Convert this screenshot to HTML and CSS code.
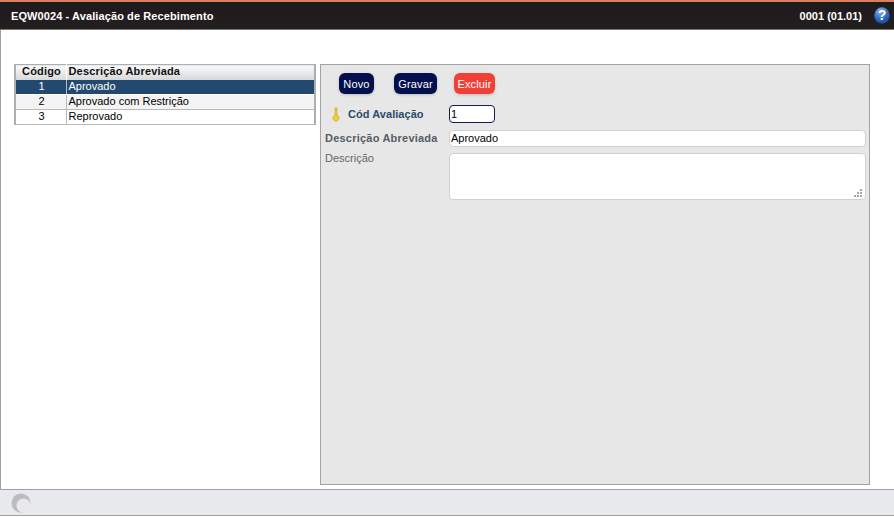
FILE: index.html
```html
<!DOCTYPE html>
<html lang="pt">
<head>
<meta charset="utf-8">
<title>EQW0024 - Avaliação de Recebimento</title>
<link rel="stylesheet" href="styles.css">
</head>
<body>
<div class="app">
  <header class="topbar">
    <span class="title">EQW0024 - Avaliação de Recebimento</span>
    <span class="version">0001 (01.01)</span>
    <svg class="help" width="16" height="17" viewBox="0 0 16 17">
      <defs>
        <radialGradient id="hg" cx="0.4" cy="0.25" r="0.85">
          <stop offset="0" stop-color="#8db8ea"/>
          <stop offset="0.55" stop-color="#2f6cc0"/>
          <stop offset="1" stop-color="#123f86"/>
        </radialGradient>
      </defs>
      <ellipse cx="8" cy="8.5" rx="7.8" ry="8.2" fill="url(#hg)"/>
      <text x="8" y="13.4" text-anchor="middle" class="help-q">?</text>
    </svg>
  </header>
  <main class="content">
    <table class="grid">
      <thead>
        <tr><th class="c1">Código</th><th class="c2">Descrição Abreviada</th></tr>
      </thead>
      <tbody>
        <tr class="sel"><td class="c1">1</td><td class="c2">Aprovado</td></tr>
        <tr class="alt"><td class="c1">2</td><td class="c2">Aprovado com Restrição</td></tr>
        <tr><td class="c1">3</td><td class="c2">Reprovado</td></tr>
      </tbody>
    </table>
    <section class="panel">
      <div class="actions">
        <button class="btn btn-novo">Novo</button>
        <button class="btn btn-gravar">Gravar</button>
        <button class="btn btn-excluir">Excluir</button>
      </div>
      <div class="form">
        <label class="lbl key-lbl">
          <svg class="key" width="10" height="15" viewBox="0 0 10 15">
            <path d="M4 1h2v7.2a3 3 0 1 1-2 0z" fill="#f0cf35" stroke="#c09a1c" stroke-width="0.6"/>
          </svg>
          <span>Cód Avaliação</span>
        </label>
        <input class="inp inp-code" value="1">
        <label class="lbl lbl-gray">Descrição Abreviada</label>
        <input class="inp inp-wide" value="Aprovado">
        <label class="lbl lbl-plain">Descrição</label>
        <div class="area-wrap">
          <textarea class="area"></textarea>
          <svg class="grip" width="9" height="9" viewBox="0 0 9 9">
            <path d="M6 0h2v2H6zM3 3h2v2H3zM6 3h2v2H6zM0 6h2v2H0zM3 6h2v2H3zM6 6h2v2H6z" fill="#a8a8a8"/>
          </svg>
        </div>
      </div>
    </section>
  </main>
  <footer class="status">
    <svg width="20" height="20" viewBox="0 0 20 20">
      <circle cx="10" cy="10" r="9.5" fill="#bcbcc0"/>
      <circle cx="12.5" cy="12.5" r="7" fill="#e8e9ed"/>
    </svg>
  </footer>
</div>
</body>
</html>
```
FILE: styles.css
```css
html, body {
  margin: 0;
  padding: 0;
  background: #fff;
}
body {
  font-family: "Liberation Sans", Arial, sans-serif;
  font-size: 11px;
  color: #000;
}
.app {
  width: 894px;
  height: 517px;
  display: flex;
  flex-direction: column;
  overflow: hidden;
}
.topbar {
  flex: none;
  box-sizing: content-box;
  height: 27px;
  border-top: 2px solid #d9805f;
  border-bottom: 1px solid #77736f;
  background: linear-gradient(#1f1b1c, #231f20);
  color: #fff;
  display: flex;
  align-items: center;
  padding: 0 4px 0 11px;
  font-weight: bold;
  font-size: 11px;
}
.title { flex: 1; letter-spacing: 0.1px; }
.version { margin-right: 12px; }
.help { display: block; }
.help-q {
  font: bold 14px "Liberation Sans", Arial, sans-serif;
  fill: #fff;
}
.content {
  flex: 1;
  display: flex;
  align-items: flex-start;
  border-left: 1px solid #a0a0a0;
  padding: 34px 0 4px 13px;
  min-height: 0;
}
.grid {
  width: 302px;
  border-collapse: collapse;
  table-layout: fixed;
  border: 2px solid #a9b0b5;
  border-top-width: 1px;
  border-bottom-width: 1px;
  margin-right: 4px;
  box-sizing: border-box;
}
.grid th, .grid td {
  padding: 0 0 1px 1px;
  height: 13px;
  line-height: 13px;
  font-size: 11px;
  border-right: 1px solid #b4babd;
  border-bottom: 1px solid #b4babd;
  overflow: hidden;
  white-space: nowrap;
}
.grid th {
  height: 13px;
  padding-bottom: 2px;
  background: linear-gradient(#fbfbfb, #d5d6d8);
  text-align: left;
  color: #111;
  border: 0;
  border-right: 1px solid #fff;
  letter-spacing: 0.17px;
}
.grid .c1 { width: 49px; text-align: center; }
.grid .c2 { border-right: 0; padding-left: 1.5px; }
.sel td { background: #234a6e; color: #fff; border-bottom-color: #fff; }
.alt td { background: #f4f4f4; }
.panel {
  width: 550px;
  height: 421px;
  box-sizing: border-box;
  background: #e7e7e7;
  border: 1px solid #a3a3a3;
  padding: 8px 3px 0 4px;
  flex: none;
}
.actions {
  display: flex;
  padding-left: 14px;
  gap: 20px;
  height: 21px;
}
.btn {
  border: 0;
  border-radius: 6px;
  color: #fff;
  font: 11px "Liberation Sans", Arial, sans-serif;
  letter-spacing: 0.15px;
  padding: 0;
  height: 21px;
  box-shadow: 0 1px 3px #bdbdbd;
}
.btn-novo { width: 35px; background: #03104d; }
.btn-gravar { width: 43px; background: #03104d; }
.btn-excluir { width: 41px; background: #f04038; margin-left: -3px; }
.form {
  display: grid;
  grid-template-columns: 124px 1fr;
  grid-template-rows: 19px 17px 47px;
  row-gap: 6px;
  margin-top: 11px;
}
.lbl {
  font-size: 11px;
  font-weight: bold;
  letter-spacing: 0.22px;
  color: #555d66;
  line-height: 18px;
}
.key-lbl {
  display: flex;
  align-items: center;
  height: 18px;
  padding-left: 6px;
  color: #2c4a6b;
  letter-spacing: 0.05px;
}
.key { margin-right: 7px; }
.lbl-gray { line-height: 17px; }
.lbl-plain { font-weight: normal; color: #666; line-height: 10px; letter-spacing: 0; }
.inp {
  box-sizing: border-box;
  font: 11px "Liberation Sans", Arial, sans-serif;
  padding: 0 1px;
  background: #fff;
  color: #000;
  outline: 0;
  margin: 0;
}
.inp-code {
  width: 46px;
  height: 18px;
  border: 1px solid #10204e;
  border-radius: 4px;
}
.inp-wide {
  width: 417px;
  height: 17px;
  padding-bottom: 2px;
  border: 1px solid #d0d0d0;
  border-radius: 4px;
}
.area-wrap { position: relative; width: 417px; height: 47px; }
.area {
  display: block;
  box-sizing: border-box;
  width: 100%;
  height: 100%;
  border: 1px solid #d0d0d0;
  border-radius: 4px;
  background: #fff;
  resize: none;
  outline: 0;
  margin: 0;
}
.grip { position: absolute; right: 3px; bottom: 2px; }
.status {
  flex: none;
  height: 25px;
  margin-bottom: 1px;
  border-top: 1px solid #a0a0a0;
  border-bottom: 1px solid #a0a0a0;
  background: #e8e9ed;
  display: flex;
  align-items: center;
  padding-left: 11px;
}
```
